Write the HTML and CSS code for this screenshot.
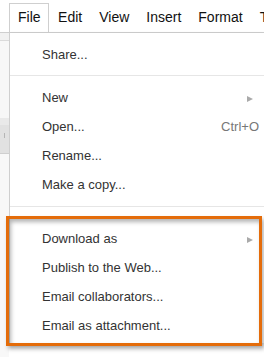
FILE: index.html
```html
<!DOCTYPE html>
<html lang="en">
  <head>
    <meta charset="UTF-8" />
    <meta name="viewport" content="width=device-width, initial-scale=1.0" />
    <link rel="stylesheet" href="styles.css">
    <title>File menu</title>
  </head>
  <body>
    <div class="menubar">
      <div class="menubar-item menubar-item--open">File</div>
      <div class="menubar-item">Edit</div>
      <div class="menubar-item">View</div>
      <div class="menubar-item">Insert</div>
      <div class="menubar-item">Format</div>
      <div class="menubar-item">Tools</div>
    </div>

    <div class="workspace">
      <div class="sidebar">
        <div class="sidebar-handle"></div>
      </div>

      <div class="menu">
        <div class="menu-item">Share...</div>
        <div class="menu-sep"></div>

        <div class="menu-item">
          <span>New</span>
          <span class="menu-arrow"></span>
        </div>
        <div class="menu-item">
          <span>Open...</span>
          <span class="menu-shortcut">Ctrl+O</span>
        </div>
        <div class="menu-item">Rename...</div>
        <div class="menu-item">Make a copy...</div>
        <div class="menu-sep menu-sep--wide"></div>

        <div class="menu-group">
          <div class="menu-item">
            <span>Download as</span>
            <span class="menu-arrow"></span>
          </div>
          <div class="menu-item">Publish to the Web...</div>
          <div class="menu-item">Email collaborators...</div>
          <div class="menu-item">Email as attachment...</div>
        </div>
      </div>
    </div>
  </body>
</html>
```

FILE: styles.css
```css
html,
body {
  margin: 0;
  padding: 0;
}

body {
  width: 264px;
  height: 357px;
  overflow: hidden;

  background-color: #fff;
  font-family: "Liberation Sans", Arial, sans-serif;
}

.menubar {
  display: flex;
  height: 29px;
  padding-top: 3px;
  padding-left: 9px;

  border-bottom: 1px solid #cfcfcf;
  white-space: nowrap;
  overflow: hidden;
}

.menubar-item {
  height: 30px;
  padding: 0 8.5px;
  box-sizing: border-box;

  color: #111;
  font-size: 14px;
  line-height: 28px;
}

.menubar-item--open {
  padding: 0 7px 0 8px;
  margin-right: 1px;

  background-color: #fff;
  border: 1px solid #cfcfcf;
  border-bottom: none;
  line-height: 27px;
}

.workspace {
  display: flex;
  height: 324px;
}

.sidebar {
  position: relative;
  width: 9px;
  flex-shrink: 0;

  background: linear-gradient(
    to bottom,
    #f1f1f1 0,
    #f1f1f1 7px,
    #dadada 7px,
    #dadada 8px,
    #f7f7f7 8px,
    #f7f7f7 85px,
    #e9e9e9 85px,
    #e9e9e9 92px,
    #e1e1e1 92px,
    #e1e1e1 120px,
    #cfcfcf 120px,
    #cfcfcf 121px,
    #f8f8f8 121px
  );
}

.sidebar-handle {
  position: absolute;
  top: 100px;
  left: 4px;
  width: 1px;
  height: 5px;

  background-color: #b5b5b5;
}

.menu {
  flex: 1;
  align-self: flex-start;
  padding: 7px 5px 3px 32px;

  background-color: #fff;
  border-left: 1px solid #cfcfcf;
  box-shadow: 0 2px 4px rgba(0, 0, 0, 0.2);
}

.menu-item {
  display: flex;
  justify-content: space-between;
  align-items: center;
  height: 29px;

  color: #333;
  font-size: 13px;
  line-height: 29px;
  white-space: nowrap;
}

.menu-shortcut {
  color: #777;
}

.menu-arrow {
  width: 0;
  height: 0;
  margin-right: 6px;
  margin-top: 3px;

  border-left: 6px solid #aaa;
  border-top: 3px solid transparent;
  border-bottom: 3px solid transparent;
}

.menu-sep {
  height: 1px;
  margin: 6px -5px 7px -32px;

  background-color: #e6e6e6;
}

.menu-sep--wide {
  margin: 7px -5px 17px -32px;
}

.menu-group {
  position: relative;

  &::after {
    content: "";
    position: absolute;
    top: -8px;
    left: -36px;
    right: -3px;
    bottom: -6px;

    border: 3px solid #e46c0a;
    box-shadow:
      2px 3px 4px rgba(0, 0, 0, 0.3),
      inset 2px 3px 4px rgba(0, 0, 0, 0.3);
  }
}
```
